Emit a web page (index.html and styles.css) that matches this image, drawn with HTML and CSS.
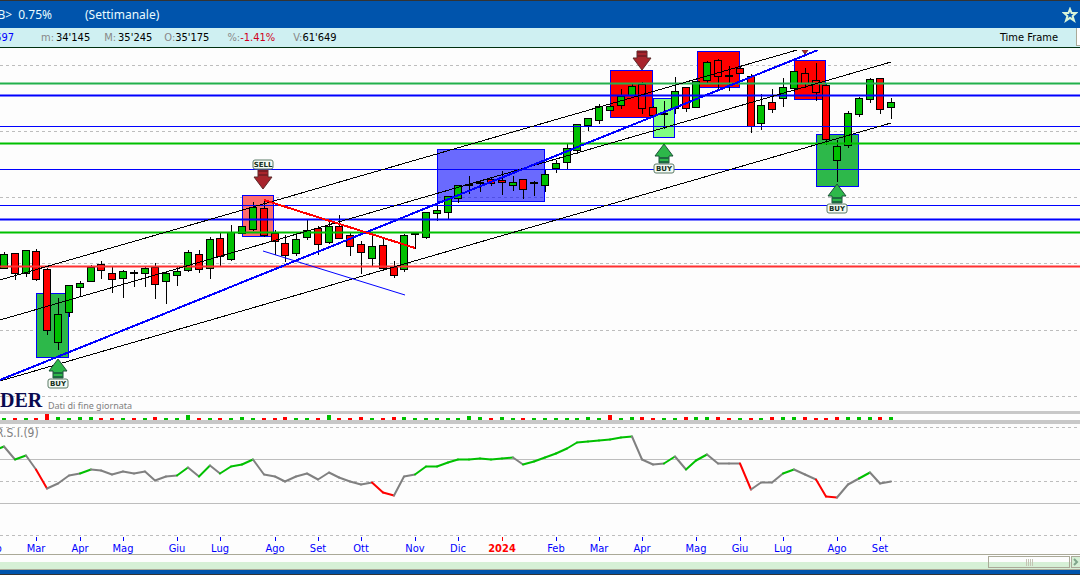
FILE: index.html
```html
<!DOCTYPE html>
<html lang="it">
<head>
<meta charset="utf-8">
<title>Grafico settimanale</title>
<link rel="stylesheet" href="styles.css">
</head>
<body>
<header class="titlebar">
  <span class="change"><span>B&gt;</span><span>0.75%</span></span>
  <span class="period">(Settimanale)</span>
  <button class="star" aria-label="Preferiti">
    <svg width="16" height="16" viewBox="0 0 16 16"><path d="M8 2 L9.6 6 L14 6 L10.6 9 L12 13.5 L8 10.8 L4 13.5 L5.4 9 L2 6 L6.4 6 Z" fill="none" stroke="#d8f4d8" stroke-width="2"/></svg>
  </button>
</header>
<section class="quotes">
  <span class="last"><span>34'697</span></span>
  <span class="quote low"><i>m:</i><b>34'145</b></span>
  <span class="quote"><i>M:</i><b>35'245</b></span>
  <span class="quote open"><i>O:</i><b>35'175</b></span>
  <span class="quote delta"><i>%:</i><b>-1.41%</b></span>
  <span class="quote volume"><i>V:</i><b>61'649</b></span>
  <label class="frame-label" for="frame">Time Frame</label>
  <select class="frame" id="frame"><option></option></select>
</section>
<main>
  <svg class="price" id="price" role="img" aria-label="Prezzi"></svg>
  <svg class="bars" id="bars" role="img" aria-label="Volumi"></svg>
  <svg class="rsi" id="rsi" role="img" aria-label="R.S.I.(9)"></svg>
</main>
<div class="scroll">
  <div class="thumb"><span></span><span></span><span></span><span></span></div>
  <button class="next" aria-label="Avanti"><svg width="6" height="8" viewBox="0 0 6 8"><path d="M1 1 L4 4 L1 7" fill="none" stroke="#7fa58a" stroke-width="2"/></svg></button>
</div>
<footer class="status"></footer>
<script src="chart.js"></script>
</body>
</html>
```
FILE: styles.css
```css
* { box-sizing: border-box; }
body {
  margin: 0;
  background: #fdfdfd;
  font-family: "DejaVu Sans Condensed", "DejaVu Sans", sans-serif;
  font-size: 11px;
  overflow: hidden;
}
button { padding: 0; border: 0; background: none; }
.titlebar {
  display: flex;
  align-items: center;
  height: 28px;
  padding: 0 2px 0 0;
  border-top: 1px solid #333;
  background: #0054ac;
  color: #e8fbff;
  font: 12px "Noto Sans", sans-serif;
}
.change { display: flex; justify-content: flex-end; gap: 6px; width: 52px; overflow: hidden; white-space: nowrap; }
.period { margin-left: 33px; }
.star { display: flex; width: 16px; height: 16px; margin-left: auto; }
.quotes {
  display: flex;
  align-items: center;
  height: 20px;
  border-bottom: 1px solid #003010;
  background: #cff0f2;
  color: #000;
}
.last { display: flex; justify-content: flex-end; width: 14px; overflow: hidden; color: #00f; }
.quote { display: flex; gap: 2px; margin-left: 14px; }
.quote i { color: #888; font-style: normal; }
.quote b { font-weight: normal; }
.low { margin-left: 27px; }
.open { gap: 0; margin-left: 12px; }
.delta { gap: 0; margin-left: 18px; }
.delta b { color: #d00020; }
.volume { gap: 0; margin-left: 18px; }
.frame-label { margin-left: auto; }
.frame {
  width: 4px;
  height: 18px;
  margin: 0 0 1px 18px;
  padding: 0;
  border: 1px solid #aaa998;
  border-width: 0 0 1px 1px;
  border-radius: 0;
  background: #fff;
  appearance: none;
}
main { display: flex; flex-direction: column; }
main svg { display: block; width: 100%; }
.price { height: 363px; }
.bars { height: 13px; border: solid #c8c8c8; border-width: 3px 0 4px; }
.rsi { height: 130px; }

.grid { stroke: #bdbdbd; stroke-dasharray: 3 3; shape-rendering: crispEdges; }
.level { stroke: #bdbdbd; shape-rendering: crispEdges; }
.halo { stroke-width: 3; stroke-opacity: .5; shape-rendering: crispEdges; }
.core { shape-rendering: crispEdges; }
.green { stroke: #00c000; }
.sea { stroke: #22b14c; }
.blue { stroke: #00f; }
.red { stroke: #f00; }
.soft { stroke: #ff3030; }
.trend { stroke: #000; shape-rendering: crispEdges; }
.thick { stroke-width: 2; shape-rendering: crispEdges; }
.zone { stroke: #00f; shape-rendering: crispEdges; }
.wick { stroke: #000; shape-rendering: crispEdges; stroke-width: 1; }
.body { stroke: #000; shape-rendering: crispEdges; }
.up { fill: #00c000; }
.down { fill: #f00; }
.flat { fill: #000; }
.bar { shape-rendering: crispEdges; }
.rsi-line { fill: none; stroke: #808080; stroke-width: 2; stroke-linecap: round; }
.rsi-line.rise { stroke: #00c000; }
.rsi-line.fall { stroke: #f00; }
.tag { fill: #f4faf4; stroke: #5a7a66; }
.tag-text { fill: #143020; font: bold 7px "DejaVu Sans", sans-serif; text-anchor: middle; }
.buy { fill: #2db84a; stroke: #1d5038; }
.buy-stem { fill: #1d6a40; }
.sell { fill: #a8242c; stroke: #5a2a2a; }
.sell-stem { fill: #7a1c24; }
.brand { fill: #0a0a50; font: bold 20px "Liberation Serif", serif; }
.note { fill: #808080; font: 9px "Noto Sans", sans-serif; }
.rsi-name { fill: #808080; font: 12px "DejaVu Sans Condensed", sans-serif; }
.month { fill: #00f; text-anchor: middle; }
.year { fill: #f00; font-weight: bold; text-anchor: middle; }

.scroll {
  display: flex;
  justify-content: flex-end;
  align-items: center;
  gap: 1px;
  height: 16px;
  border: solid #aaa998;
  border-width: 1px 0;
  background: linear-gradient(#fdfdfd 50%, #d6f0d6 50%);
}
.thumb {
  display: flex;
  justify-content: center;
  align-items: center;
  gap: 1px;
  width: 82px;
  height: 12px;
  border: 1px solid #aaa998;
  background: linear-gradient(#fdfdfd 50%, #d6f0d6 50%);
}
.thumb span { width: 1px; height: 7px; background: #c4c4b4; }
.next {
  display: flex;
  justify-content: center;
  align-items: center;
  width: 9px;
  height: 12px;
  border: solid #aaa998;
  border-width: 1px 0 1px 1px;
  background: #d6f0d6;
}
.status { height: 5px; border-bottom: 1px solid #333; background: #0054ac; }
```
FILE: chart.js
```js
// Weekly candles: high, body top, body bottom, low, type (g up, r down, k flat)
const candles = `252 254 268 268 g|253 253 273 279 r|250 250 273 276 g|249 251 279 280 r|268 269 330 334 r|298 314 342 349 g|285 285 312 316 g|281 283 287 296 g|265 267 281 281 g|261 264 270 278 r|267 273 279 292 r|270 271 278 297 g|270 272 273 286 k|267 268 273 286 g|263 267 284 298 r|272 273 281 303 g|267 271 275 285 g|250 252 270 271 g|250 254 269 272 r|237 239 268 278 g|233 238 256 265 r|225 232 259 260 g|226 226 233 233 g|202 207 229 230 g|200 208 235 236 r|230 233 241 254 r|235 243 255 261 r|233 239 253 255 g|220 230 237 239 g|226 228 244 254 r|220 226 242 243 g|215 226 238 238 r|233 235 246 255 r|241 244 252 273 r|235 246 258 265 g|238 245 268 270 r|261 267 275 277 r|234 235 269 271 g|233 233 234 248 k|212 212 237 238 g|206 210 213 220 g|196 196 212 218 g|185 185 198 202 g|176 184 185 193 k|180 182 183 191 g|178 179 183 185 r|171 180 182 194 r|176 182 185 190 g|179 179 189 198 r|181 182 183 195 g|170 174 185 191 g|160 163 168 172 g|144 148 162 169 g|124 124 150 153 g|118 118 125 130 g|104 106 120 123 g|105 106 110 110 g|89 96 105 108 g|84 86 95 95 g|82 84 108 113 r|106 107 115 115 r|101 113 114 128 k|77 91 108 113 g|87 87 108 111 r|81 81 107 107 g|61 62 80 82 g|59 60 76 88 r|66 75 76 90 k|66 68 73 73 r|74 76 126 132 r|94 105 123 129 g|89 102 109 112 r|78 87 98 106 g|71 71 88 91 g|68 73 83 87 r|63 80 92 100 r|84 85 139 144 r|140 146 160 181 g|111 113 145 147 g|97 98 114 116 g|78 79 99 102 g|78 78 109 113 r|98 102 107 118 g`
  .split("|").map(c => c.split(" ")).map(([h, t, b, l, k]) => ({ h: +h, t: +t, b: +b, l: +l, k }));

const volumes = "g1 r1 g1 r1 r5 g2 g1 g2 g2 r1 r1 g1 r1 g1 r2 g1 g1 g4 r1 g1 r1 g1 g2 g1 r1 r1 r2 g1 g1 r1 g4 r1 r1 r2 g1 r1 r2 g2 g1 g1 g1 g1 g1 g3 g2 r1 g2 g1 r1 g1 g1 g1 g1 g1 g2 g1 r4 g1 g2 r2 r1 g1 g1 r2 g2 g2 r2 r1 g1 r1 g1 r2 g2 g2 r2 r1 r1 r2 g2 g2 g2 r2 g2".split(" ");

const rsi = [446,459,455,469,488,483,475,473,469,470,474,471,473,471,480,476,475,467,476,465,473,466,464,459,474,476,481,476,473,479,472,477,481,484,482,492,495,476,474,466,466,462,459,459,458,459,458,457,464,461,457,453,448,442,441,440,439,437,436,459,464,463,456,469,460,454,463,463,463,489,482,482,473,469,474,479,496,497,484,478,472,483,481];
const rises = [0,2,8,17,19,21,22,23,39,40,41,42,43,44,45,46,47,49,50,51,52,53,54,55,56,57,58,62,64,65,73,80];
const falls = [4,35,36,69,76,77];

const months = [[-1,"Feb"],[3,"Mar"],[7,"Apr"],[11,"Mag"],[16,"Giu"],[20,"Lug"],[25,"Ago"],[29,"Set"],[33,"Ott"],[38,"Nov"],[42,"Dic"],[46,"2024"],[51,"Feb"],[55,"Mar"],[59,"Apr"],[64,"Mag"],[68,"Giu"],[72,"Lug"],[77,"Ago"],[81,"Set"]];

const xAt = i => Math.round(4 + i * 10.82);
const hline = (y, cls) => `<line class="${cls}" x1="0" x2="100%" y1="${y}.5" y2="${y}.5"/>`;
const band = (y, c) => hline(y, "halo " + c) + hline(y, "core " + c);
const seg = (x1, y1, x2, y2, cls) => `<line class="${cls}" x1="${x1}" y1="${y1}" x2="${x2}" y2="${y2}"/>`;
const zone = (x, y, r, b, fill) => `<rect class="zone" x="${x}.5" y="${y}.5" width="${r - x - 1}" height="${b - y - 1}" fill="${fill}"/>`;

function candle(c, i) {
  const x = xAt(i), cls = { g: "up", r: "down", k: "flat" }[c.k];
  return `<line class="wick" x1="${x}.5" x2="${x}.5" y1="${c.h}" y2="${c.l + 1}"/>` +
    `<rect class="body ${cls}" x="${x - 4}.5" y="${c.t}.5" width="7" height="${c.b - c.t}"/>`;
}
function tag(x, y, text) {
  return `<rect class="tag" x="${x - 10}" y="${y}" width="20" height="9" rx="2"/><text class="tag-text" x="${x}" y="${y + 7}">${text}</text>`;
}
function buy(x, y) {
  return `<path class="buy" d="M${x} ${y} l9 12 h-4 v7 h-10 v-7 h-4 z"/><path class="buy-stem" d="M${x - 5} ${y + 13} h10 v2 h-10 z m0 4 h10 v2 h-10 z"/>` + tag(x, y + 20, "BUY");
}
function sell(x, y) {
  return `<path class="sell" d="M${x} ${y} l-9 -12 h4 v-7 h10 v7 h4 z"/><path class="sell-stem" d="M${x - 5} ${y - 19} h10 v2 h-10 z m0 4 h10 v2 h-10 z"/>`;
}

document.getElementById("price").innerHTML = `<clipPath id="plot"><rect x="0" y="50" width="100%" height="361"/></clipPath>
<g transform="translate(0 -48)"><g clip-path="url(#plot)">` +
  [65, 131, 197, 263, 330, 396].map(y => hline(y, "grid")).join("") +
  zone(36, 293, 69, 358, "#2db84a") + zone(242, 195, 274, 237, "#ff6c6c") +
  zone(437, 149, 545, 202, "rgba(0,0,255,.58)") + zone(610, 70, 653, 118, "#f00") +
  zone(653, 98, 675, 138, "#80ff80") + zone(697, 51, 740, 88, "#f00") +
  zone(794, 60, 826, 100, "#f00") + zone(816, 134, 859, 187, "#2db84a") +
  candles.map(candle).join("") +
  [126, 169, 205].map(y => hline(y, "core blue")).join("") +
  band(83, "sea") + band(95, "blue") + band(143, "green") + band(219, "blue") + band(232, "green") + band(266, "soft") +
  seg(0, 280, 797, 50, "trend") + seg(0, 320, 891, 62, "trend") + seg(0, 381, 891, 123, "trend") +
  seg(0, 380, 818, 50, "blue thick") + seg(264, 200, 415, 248, "red thick") + seg(263, 251, 405, 295, "blue") +
  buy(58, 359) + buy(664, 144) + buy(837, 184) +
  sell(263, 189) + tag(263, 160, "SELL") + sell(642, 70) + sell(805, 54) +
  `<text class="brand" x="0" y="407">DER</text><text class="note" x="48" y="409">Dati di fine giornata</text></g></g>`;

document.getElementById("bars").innerHTML = volumes.map((v, i) => {
  const h = Number(v.slice(1));
  return `<rect class="bar ${v[0] === "g" ? "up" : "down"}" x="${xAt(i) - 2}" y="${5 - h}" width="4" height="${h + 1}"/>`;
}).join("");

document.getElementById("rsi").innerHTML = `<g transform="translate(0 -424)">` +
  hline(427, "grid") + hline(459, "level") + hline(481, "grid") + hline(503, "level") + hline(535, "grid") +
  `<text class="rsi-name" x="-4" y="437">R.S.I.(9)</text>` +
  rsi.map((y, i) => {
    const cls = rises.includes(i) ? "rise" : falls.includes(i) ? "fall" : "";
    return seg(xAt(i - 1), i ? rsi[i - 1] + .5 : 451, xAt(i), y + .5, "rsi-line " + cls);
  }).join("") +
  months.map(([i, name]) => {
    const year = name === "2024";
    return seg(xAt(i) + .5, 537, xAt(i) + .5, 541, "core " + (year ? "red" : "blue")) +
      `<text class="${year ? "year" : "month"}" x="${xAt(i)}" y="552">${name}</text>`;
  }).join("") + `</g>`;
```
